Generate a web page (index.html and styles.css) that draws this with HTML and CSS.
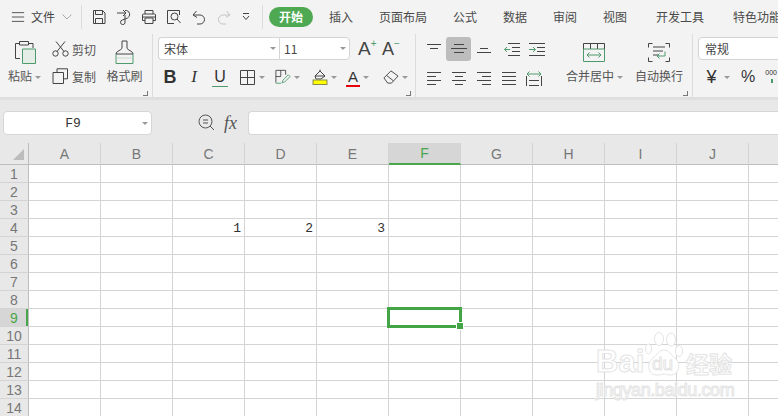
FILE: index.html
```html
<!DOCTYPE html>
<html lang="zh">
<head>
<meta charset="utf-8">
<title>WPS 表格</title>
<link rel="stylesheet" href="styles.css">
</head>
<body>
<div class="app">
  <header class="topbar">
    <div class="file-menu">
      <svg class="ic16" viewBox="0 0 16 16"><path d="M1 3h14M1 8h14M1 13h14"/></svg>
      <span>文件</span>
      <svg class="chev" viewBox="0 0 10 6"><path d="M.5.5 5 5 9.5.5"/></svg>
    </div>
    <div class="quick">
      <svg viewBox="0 0 16 16"><path d="M2.500 1.500h9l2.500 2.500v10.500h-11.500zM4.500 1.500v4h7v-4M4.500 14.500v-5h7v5"/></svg>
      <svg viewBox="0 0 16 16"><path d="M1 4h8M7 1l3 3-3 3M9 1.500h1.500a4 4 0 0 1 1 7.500L6.500 11a2.300 2.300 0 1 0 2.500 3V6"/></svg>
      <svg viewBox="0 0 16 16"><path d="M4 5V1.500h8V5M4 11.500H1.500V6a1 1 0 0 1 1-1h11a1 1 0 0 1 1 1v5.500H12M4 9h8v5.500H4zM2 8h13"/></svg>
      <svg viewBox="0 0 16 16"><path d="M8 14.500H1.500v-13h12V6"/><circle cx="8.500" cy="7.500" r="3.500"/><path d="m11 10 3.500 4"/></svg>
      <svg viewBox="0 0 16 16"><path d="M5.500 2 2 6l4 2.500M2.500 6H9a4.500 4.500 0 0 1 0 9H6"/></svg>
      <svg class="off" viewBox="0 0 16 16"><path d="M10.500 2 14 6l-4 2.500M13.500 6H7a4.500 4.500 0 0 0 0 9h3"/></svg>
      <svg class="mini" viewBox="0 0 8 8"><path d="M1 .5h6M1 3l3 3.500L7 3"/></svg>
    </div>
    <nav class="tabs">
      <span class="tab active">开始</span>
      <span class="tab first">插入</span>
      <span class="tab">页面布局</span>
      <span class="tab">公式</span>
      <span class="tab">数据</span>
      <span class="tab">审阅</span>
      <span class="tab">视图</span>
      <span class="tab wide">开发工具</span>
      <span class="tab wide">特色功能</span>
    </nav>
  </header>

  <section class="ribbon">
    <div class="group clip">
      <div class="big paste">
        <svg class="i-paste" viewBox="0 0 22 24"><path d="M6 18.500H1.500V3.500h4M15 3.500h4V8"/><path d="M5.500 1.500h9v3.500h-9z" fill="#f3f3f3"/><path class="green-fill" d="M8.500 9h13v14.500h-13z"/></svg>
        <span class="label">粘贴<i class="caret"></i></span>
      </div>
      <div class="cutcopy">
        <div class="line"><svg viewBox="0 0 17 16"><circle cx="3.500" cy="12.500" r="2.700"/><circle cx="13.500" cy="12.500" r="2.700"/><path d="M5 10.500 13 .5M12 10.500 4 .5"/></svg><span>剪切</span></div>
        <div class="line"><svg viewBox="0 0 17 16"><path d="M5 4V.8h10.500v10H12M1 4.500h10.500v11H1z"/></svg><span>复制</span></div>
      </div>
      <div class="big brush">
        <svg class="i-brush" viewBox="0 0 19 24"><path d="M7 1h5v7c0 2 6 3 6 6H1c0-3 6-4 6-6z"/><path class="green-stroke" d="M1 14v9.500h17V14" /><path d="M2 18h15" stroke="#c8d8cc"/></svg>
        <span class="label">格式刷</span>
      </div>
      <i class="launcher"></i>
    </div>

    <div class="group font">
      <div class="combos">
        <div class="combo name"><span>宋体</span><i class="caret"></i></div>
        <div class="combo size"><span>11</span><i class="caret"></i></div>
        <span class="growA">A<sup>+</sup></span>
        <span class="growA small">A<sup>−</sup></span>
      </div>
      <div class="fontrow">
        <b class="fmt bold">B</b>
        <i class="fmt ital">I</i>
        <span class="fmt under">U</span>
        <div class="split"><svg viewBox="0 0 15 15"><path d="M.5.500h14v14H.5zM7.500.500v14M.5 7.500h14"/></svg><i class="caret"></i></div>
        <div class="split"><svg viewBox="0 0 18 17"><path d="M1 15V1h11v5M6.500 1v7H1"/><path class="green-stroke" d="M1 15.500h6M8 15l1-3 6-6 2 2-6 6z"/></svg><i class="caret"></i></div>
        <div class="split"><svg viewBox="0 0 16 16"><path d="m3 7 5-5 5 5-4 3H4zM8 2V.500M3 7h10"/><rect x="1" y="11" width="14" height="4.500" fill="#ffff00" stroke="#8a8a55"/></svg><i class="caret"></i></div>
        <div class="split colorA"><span>A</span><i class="caret"></i></div>
        <div class="split"><svg viewBox="0 0 17 15"><path d="M1 8.500 8.500 1 16 6.500 9 14H5z"/><path d="m4 6 7 5.500"/></svg><i class="caret"></i></div>
      </div>
      <i class="launcher"></i>
    </div>

    <div class="group align">
      <div class="alignbox">
        <div class="aligns top">
          <span class="ai"><svg viewBox="0 0 14 10"><path d="M0 .5h14M3 4.500h8"/></svg></span>
          <span class="ai on"><svg viewBox="0 0 16 10"><path d="M0 4.500h16M3 8.500h10M3 .5h10"/></svg></span>
          <span class="ai"><svg viewBox="0 0 14 10"><path d="M3 4.500h8M0 8.500h14"/></svg></span>
          <span class="ai gap"><svg viewBox="0 0 16 13"><path d="M4 .5h12M8 4.500h8M8 8.500h8M4 12.500h12"/><path class="green-stroke" d="M6 6.500H.5M3 4 .5 6.500 3 9"/></svg></span>
          <span class="ai"><svg viewBox="0 0 16 13"><path d="M0 .5h16M8 4.500h8M8 8.500h8M0 12.500h16"/><path class="green-stroke" d="M0 6.500h6M4 4l2.500 2.500L4 9"/></svg></span>
        </div>
        <div class="aligns">
          <span class="ai"><svg viewBox="0 0 14 13"><path d="M0 .5h14M0 4.500h9M0 8.500h14M0 12.500h9"/></svg></span>
          <span class="ai"><svg viewBox="0 0 14 13"><path d="M0 .5h14M3 4.500h8M0 8.500h14M3 12.500h8"/></svg></span>
          <span class="ai"><svg viewBox="0 0 14 13"><path d="M0 .5h14M5 4.500h9M0 8.500h14M5 12.500h9"/></svg></span>
          <span class="ai"><svg viewBox="0 0 14 13"><path d="M0 .5h14M0 4.500h14M0 8.500h14M0 12.500h14"/></svg></span>
          <span class="ai"><svg viewBox="0 0 16 15"><path d="M.5 5v10M15.500 5v10M3 9.500h10M3 14.500h10"/><path class="green-stroke" d="M1 3h14M3.500.5 1 3l2.500 2.500M12.500.5 15 3l-2.500 2.500"/></svg></span>
        </div>
      </div>
      <div class="big merge">
        <svg class="i-merge" viewBox="0 0 22 19"><path d="M.5 6V.5h21V6M7.500.5V6M14.500.5V6"/><path class="green-stroke" d="M.5 6h21v12.500H.5zM4 12h14M6.500 9.500 4 12l2.500 2.500M15.500 9.500 18 12l-2.500 2.500"/></svg>
        <span class="label">合并居中<i class="caret"></i></span>
      </div>
      <div class="big wrap">
        <svg class="i-wrap" viewBox="0 0 22 19"><path d="M4.500.5h-4v4M17.500.5h4v4M.5 14.500v4h4M21.500 14.500v4h-4M5 4h12M5 8h10M5 12h6"/><path class="green-stroke" d="M17 8.500v4.500H9M11.500 10.500 9 13l2.500 2.500"/></svg>
        <span class="label">自动换行</span>
      </div>
      <i class="launcher"></i>
    </div>

    <div class="group num">
      <div class="combo fmtcombo"><span>常规</span></div>
      <div class="numrow">
        <span class="yen">¥</span><i class="caret"></i>
        <span class="pct">%</span>
        <span class="thou">000</span>
      </div>
    </div>
  </section>

  <div class="band"></div>

  <section class="formula">
    <div class="namebox"><span>F9</span><i class="caret"></i></div>
    <svg class="zoomfx" viewBox="0 0 17 17"><circle cx="7.500" cy="7.500" r="6.500"/><path d="M5 6h5M5 9h5M12 12l4 4"/></svg>
    <span class="fx">fx</span>
    <div class="input"></div>
  </section>

  <main class="sheet">
    <table class="grid">
      <thead>
        <tr><th class="corner"><i></i></th><th>A</th><th>B</th><th>C</th><th>D</th><th>E</th><th class="sel">F</th><th>G</th><th>H</th><th>I</th><th>J</th><th></th></tr>
      </thead>
      <tbody>
        <tr><th>1</th><td></td><td></td><td></td><td></td><td></td><td></td><td></td><td></td><td></td><td></td><td></td></tr>
        <tr><th>2</th><td></td><td></td><td></td><td></td><td></td><td></td><td></td><td></td><td></td><td></td><td></td></tr>
        <tr><th>3</th><td></td><td></td><td></td><td></td><td></td><td></td><td></td><td></td><td></td><td></td><td></td></tr>
        <tr><th>4</th><td></td><td></td><td>1</td><td>2</td><td>3</td><td></td><td></td><td></td><td></td><td></td><td></td></tr>
        <tr><th>5</th><td></td><td></td><td></td><td></td><td></td><td></td><td></td><td></td><td></td><td></td><td></td></tr>
        <tr><th>6</th><td></td><td></td><td></td><td></td><td></td><td></td><td></td><td></td><td></td><td></td><td></td></tr>
        <tr><th>7</th><td></td><td></td><td></td><td></td><td></td><td></td><td></td><td></td><td></td><td></td><td></td></tr>
        <tr><th>8</th><td></td><td></td><td></td><td></td><td></td><td></td><td></td><td></td><td></td><td></td><td></td></tr>
        <tr><th class="rowsel">9</th><td></td><td></td><td></td><td></td><td></td><td class="active-cell"><i class="cursor"><i class="handle"></i></i></td><td></td><td></td><td></td><td></td><td></td></tr>
        <tr><th>10</th><td></td><td></td><td></td><td></td><td></td><td></td><td></td><td></td><td></td><td></td><td></td></tr>
        <tr><th>11</th><td></td><td></td><td></td><td></td><td></td><td></td><td></td><td></td><td></td><td></td><td></td></tr>
        <tr><th>12</th><td></td><td></td><td></td><td></td><td></td><td></td><td></td><td></td><td></td><td></td><td></td></tr>
        <tr><th>13</th><td></td><td></td><td></td><td></td><td></td><td></td><td></td><td></td><td></td><td></td><td></td></tr>
        <tr><th>14</th><td></td><td></td><td></td><td></td><td></td><td></td><td></td><td></td><td></td><td></td><td></td></tr>
      </tbody>
    </table>
    <div class="watermark">
      <div class="wm-top">
        <span class="wm-bai">Bai</span>
        <span class="wm-paw">
          <svg viewBox="0 0 38 44"><ellipse cx="3.500" cy="17" rx="3" ry="5"/><ellipse cx="14" cy="7" rx="4.500" ry="6.500"/><ellipse cx="26" cy="7.500" rx="4.500" ry="6.500"/><ellipse cx="34" cy="19" rx="3.500" ry="5.500"/><path d="M19 18c5 0 7 5 11 8 6 5 5 17-5 17-3 0-4-1-6-1s-4 1-7 1C3 43 1 32 8 26c4-3 6-8 11-8z"/></svg>
          <span class="wm-du">du</span>
        </span>
        <span class="wm-jy">经验</span>
      </div>
      <div class="wm-url">jingyan.baidu.com</div>
    </div>
  </main>
</div>
</body>
</html>
```

FILE: styles.css
```css
* { box-sizing: border-box; }
html, body { margin: 0; padding: 0; }
body {
  width: 778px;
  height: 416px;
  overflow: hidden;
  background: #fff;
  font-family: "Noto Sans CJK SC", "Liberation Sans", sans-serif;
  font-size: 12px;
  color: #4a4a4a;
}
svg { fill: none; stroke: #444; stroke-width: 1; display: block; flex: none; }
.green-stroke { stroke: #4f9a6c; }
.green-fill { stroke: #4f9a6c; fill: #e4eee7; }
.app { width: 778px; height: 416px; display: flex; flex-direction: column; overflow: hidden; }

/* top bar */
.topbar { height: 34px; flex: none; background: #f3f3f3; display: flex; align-items: center; overflow: hidden; }
.file-menu { flex: none; width: 82px; height: 24px; padding-left: 11px; display: flex; align-items: center; border-right: 1px solid #dcdcdc; }
.file-menu span { margin-left: 6px; line-height: 16px; color: #444; white-space: nowrap; }
.ic16 { width: 14px; height: 14px; }
.chev { width: 10px; height: 6px; margin-left: 7px; stroke: #aaa; }
.quick { flex: none; width: 181px; height: 24px; padding-left: 9px; display: flex; align-items: center; gap: 9px; border-right: 1px solid #dcdcdc; }
.quick svg { width: 16px; height: 16px; }
.quick svg.off { stroke: #c4c4c4; }
.quick svg.mini { width: 8px; height: 8px; margin-left: 1px; }
.tabs { flex: none; display: flex; align-items: center; padding-left: 6px; white-space: nowrap; }
.tab { margin-right: 26px; line-height: 18px; color: #4a4a4a; }
.tab.active { width: 44px; height: 20px; margin-right: 16px; line-height: 20px; border-radius: 10px; background: #4fa952; color: #fff; text-align: center; font-weight: 700; }
.tab.wide { margin-left: 3px; }

/* ribbon */
.ribbon { height: 63px; flex: none; background: #f3f3f3; display: flex; overflow: hidden; }
.group { position: relative; height: 63px; border-right: 1px solid #dcdcdc; flex: none; }
.launcher { position: absolute; right: 4px; bottom: 1px; width: 5px; height: 5px; border-right: 1px solid #777; border-bottom: 1px solid #777; }
.caret { display: inline-block; width: 0; height: 0; border-left: 3px solid transparent; border-right: 3px solid transparent; border-top: 3px solid #999; flex: none; }
.label { display: block; line-height: 18px; color: #555; white-space: nowrap; }
.label .caret { margin-left: 3px; vertical-align: 2px; }
.big { display: flex; flex-direction: column; align-items: center; justify-content: space-between; height: 45px; }

.clip { width: 153px; display: flex; align-items: flex-start; padding: 6px 0 0 8px; }
.paste { width: 36px; align-items: flex-start; }
.i-paste { width: 22px; height: 24px; margin-left: 6px; }
.cutcopy { width: 48px; margin-left: 8px; height: 45px; display: flex; flex-direction: column; justify-content: space-between; }
.line { display: flex; align-items: center; height: 18px; color: #555; }
.line svg { width: 17px; height: 16px; margin-right: 3px; }
.brush { width: 37px; margin-left: 6px; }
.i-brush { width: 19px; height: 24px; }

.font { width: 263px; padding: 3px 0 0 5px; }
.combos { display: flex; align-items: center; height: 23px; }
.combo { height: 23px; background: #fff; border: 1px solid #d4d4d4; display: flex; align-items: center; justify-content: space-between; color: #444; }
.combo.name { width: 121px; padding: 0 3px 0 5px; border-radius: 4px 0 0 4px; border-right: 0; }
.combo.size { width: 71px; padding: 0 3px 0 4px; border-radius: 0 4px 4px 0; }
.growA { margin-left: 8px; font-family: "Liberation Sans", sans-serif; font-size: 19px; line-height: 22px; width: 24px; color: #444; white-space: nowrap; }
.growA sup { font-size: 10px; color: #4f9a6c; vertical-align: 8px; line-height: 0; }
.growA.small { font-size: 18px; margin-left: 0; }
.fontrow { display: grid; grid-template-columns: 24px 24px 28px 36px 37px 35px 36px 30px; height: 24px; margin-top: 5px; align-items: center; }
.fmt { text-align: center; font-family: "Liberation Sans", sans-serif; color: #333; line-height: 20px; }
.bold { font-size: 18px; font-weight: 700; }
.ital { font-size: 17px; font-family: "Liberation Serif", serif; }
.under { font-size: 16px; width: 16px; margin-left: 6px; border-bottom: 1px solid #4f9a6c; line-height: 18px; }
.split { display: flex; align-items: center; }
.split svg { width: 16px; height: 16px; margin: 0 4px 0 5px; }
.split:nth-child(4) svg { width: 15px; height: 15px; margin: 0 5px 0 6px; }
.split .caret { margin-left: -1px; }
.colorA span { width: 14px; margin: 0 4px; line-height: 17px; font-family: "Liberation Sans", sans-serif; font-size: 15px; text-align: center; border-bottom: 2px solid #e8000b; color: #333; }

.align { width: 277px; padding: 3px 0 0 5px; display: flex; align-items: flex-start; }
.alignbox { width: 139px; }
.aligns { display: flex; height: 24px; margin-bottom: 5px; }
.ai { width: 25px; height: 24px; display: flex; align-items: center; justify-content: center; }
.ai svg { width: 14px; height: 13px; }
.top .ai svg { height: 10px; }
.top .ai.gap { margin-left: 3px; }
.top .ai.gap svg, .top .ai.gap + .ai svg { width: 16px; height: 13px; }
.ai.on { background: #bdbdbd; border-radius: 3px; }
.ai.on svg { width: 16px; }
.aligns:last-child .ai:last-child svg { width: 16px; height: 15px; }
.merge { width: 60px; height: 48px; margin-left: 6px; align-items: flex-start; padding-top: 6px; }
.i-merge { width: 22px; height: 19px; margin-left: 17px; }
.wrap { width: 48px; height: 48px; margin-left: 9px; padding-top: 6px; }
.i-wrap { width: 22px; height: 19px; }

.num { flex: 1; border: 0; padding: 3px 0 0 5px; }
.fmtcombo { width: 110px; padding-left: 6px; border-radius: 4px 0 0 4px; justify-content: flex-start; }
.numrow { display: flex; align-items: center; height: 24px; margin-top: 5px; padding-left: 6px; white-space: nowrap; color: #333; font-family: "Liberation Sans", sans-serif; }
.yen { width: 15px; font-size: 18px; line-height: 20px; text-align: center; }
.numrow .caret { margin-left: 5px; }
.pct { font-size: 16px; margin-left: 11px; }
.thou { position: relative; font-size: 7px; margin-left: 10px; align-self: flex-start; line-height: 12px; margin-top: 2px; }
.thou::after { content: ""; position: absolute; left: 6px; top: 12px; width: 2px; height: 4px; background: #4f9a6c; }

.band { height: 3px; flex: none; background: #dedede; }

/* formula bar */
.formula { height: 43px; flex: none; background: #e8e8e8; display: flex; align-items: flex-start; padding: 11px 0 0 3px; }
.namebox { width: 149px; height: 24px; background: #fff; border: 1px solid #d6d6d6; border-radius: 4px; display: flex; align-items: center; padding: 0 3px 0 0; font-family: "Liberation Mono", monospace; font-size: 13px; color: #333; }
.namebox span { flex: 1; text-align: center; }
.zoomfx { width: 17px; height: 17px; margin: 3px 0 0 46px; stroke: #555; }
.fx { width: 18px; margin: 1px 0 0 9px; font-family: "Liberation Serif", serif; font-style: italic; font-size: 18px; line-height: 22px; color: #555; }
.input { flex: 1; height: 24px; margin-left: 6px; background: #fff; border: 1px solid #d6d6d6; border-right: 0; border-radius: 4px 0 0 4px; }

/* sheet */
.sheet { position: relative; flex: 1; overflow: hidden; background: #fff; }
.grid { border-collapse: separate; border-spacing: 0; table-layout: fixed; width: 780px; font-family: "Liberation Sans", sans-serif; }
.grid th { font-weight: 400; background: #e8e8e8; color: #777; padding: 0; font-size: 14px; }
.grid thead th { height: 22px; border-right: 1px solid #d4d4d4; border-bottom: 1px solid #bdbdbd; width: 72px; text-align: center; }
.grid thead th.corner { width: 29px; position: relative; border-right-color: #bdbdbd; }
.grid thead th.sel { background: #d6d6d6; color: #4aa64c; border-bottom: 2px solid #4aa64c; }
.corner i { position: absolute; right: 4px; bottom: 4px; width: 0; height: 0; border-left: 11px solid transparent; border-bottom: 11px solid #bcbcbc; }
.grid tbody th { height: 18px; padding-top: 1px; border-right: 1px solid #bdbdbd; border-bottom: 1px solid #d4d4d4; text-align: center; font-size: 14px; line-height: 16px; }
.grid tbody th.rowsel { background: #d6d6d6; color: #4aa64c; box-shadow: inset -2px 0 0 #4aa64c; }
.grid td { height: 18px; padding: 3px 3px 0 0; border-right: 1px solid #d4d4d4; border-bottom: 1px solid #d4d4d4; text-align: right; font-family: "Liberation Mono", monospace; font-size: 13px; line-height: 14px; color: #333; }
.active-cell { position: relative; }
.cursor { position: absolute; left: -2px; top: -2px; width: 75px; height: 21px; border: 3px solid #43a545; }
.handle { position: absolute; right: -4px; bottom: -4px; width: 6px; height: 6px; background: #43a545; border: 1px solid #fff; box-sizing: content-box; margin: -1px; }

/* watermark */
.watermark { position: absolute; left: 596px; top: 189px; width: 140px; }
.wm-top { display: flex; align-items: flex-end; height: 45px; }
.wm-bai, .wm-du, .wm-jy, .wm-url { color: #fff; -webkit-text-stroke: 1px #e4e4e4; font-family: "Liberation Sans", sans-serif; }
.wm-bai { width: 49px; font-size: 31px; font-weight: 700; line-height: 31px; }
.wm-paw { position: relative; width: 39px; height: 45px; }
.wm-paw svg { width: 38px; height: 44px; stroke: #e4e4e4; fill: #fff; }
.wm-du { position: absolute; left: 7px; bottom: 3px; font-size: 19px; line-height: 20px; }
.wm-jy { margin-left: 2px; width: 50px; font-family: "Noto Sans CJK SC", sans-serif; font-size: 23px; font-weight: 700; line-height: 28px; white-space: nowrap; }
.wm-url { margin-top: 3px; font-size: 18px; line-height: 20px; white-space: nowrap; letter-spacing: -.4px; }
```
